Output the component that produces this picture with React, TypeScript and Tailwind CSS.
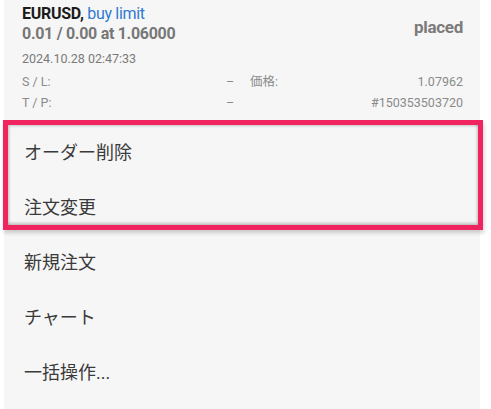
import React from 'react'

const FONT = { fontFamily: 'Roboto, "Noto Sans CJK JP", sans-serif' }

const MENU = ['オーダー削除', '注文変更', '新規注文', 'チャート', '一括操作...']

export default function App() {
  return (
    <div className="w-[491px] h-[409px] bg-white overflow-hidden" style={FONT}>
      <div className="relative ml-[4px] w-[476px] h-full bg-[#f6f6f6]">
        {/* order header */}
        <div className="h-[125px] pl-[18px] pr-[17px] pt-[4px]">
          <div className="flex justify-between">
            <div>
              <div className="text-[16px] leading-[20px] font-bold text-[#1b1b1b] tracking-[-0.3px]">
                EURUSD, <span className="font-normal text-[#2f7bd0]">buy limit</span>
              </div>
              <div className="text-[16px] leading-[19px] font-bold text-[#777] tracking-[-0.3px]">
                0.01 / 0.00 at 1.06000
              </div>
            </div>
            <div className="pt-[11px] text-[17px] font-bold text-[#7b7b7b] tracking-[-0.3px]">placed</div>
          </div>
          <div className="mt-[8px] text-[12.5px] leading-[16px] text-[#7a7a7a]">2024.10.28 02:47:33</div>
          <div className="mt-[4px] grid grid-cols-[204px_24px_1fr_auto] text-[12.5px] leading-[21px] text-[#8a8a8a]">
            <span>S / L:</span>
            <span>–</span>
            <span>価格:</span>
            <span className="text-right">1.07962</span>
            <span>T / P:</span>
            <span>–</span>
            <span></span>
            <span className="text-right">#150353503720</span>
          </div>
        </div>

        {/* actions */}
        <div className="flex flex-col">
          {MENU.map((m) => (
            <div key={m} className="h-[55px] flex items-center pl-[20px] text-[18px] text-[#3a3a3a]">
              {m}
            </div>
          ))}
        </div>

        {/* highlight frame */}
        <div className="absolute left-[-1px] top-[120px] w-[480px] h-[110px] border-[5px] border-[#f0255f] shadow-[inset_1px_1px_3px_rgba(0,0,0,0.2),inset_-1px_-2px_3px_rgba(0,0,0,0.2),1px_3px_4px_rgba(0,0,0,0.18)]" />
      </div>
    </div>
  )
}
